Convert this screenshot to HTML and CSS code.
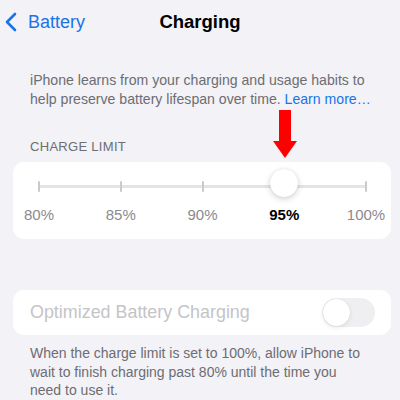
FILE: index.html
```html
<!DOCTYPE html>
<html lang="en">
<head>
    <meta charset="UTF-8">
    <meta name="viewport" content="width=device-width, initial-scale=1.0">
    <title>Charging</title>
    <link rel="stylesheet" href="styles.css">
</head>
<body>
    <header class="nav">
        <a class="back" href="#">
            <svg class="chevron" width="12" height="20" viewBox="0 0 12 20">
                <path d="M10 2 L2 10 L10 18" fill="none" stroke="currentColor" stroke-width="2.6" stroke-linecap="round" stroke-linejoin="round"/>
            </svg>
            <span>Battery</span>
        </a>
        <h1 class="title">Charging</h1>
    </header>

    <p class="intro">iPhone learns from your charging and usage habits to help preserve battery lifespan over time. <a href="#">Learn more…</a></p>

    <h2 class="section-title">CHARGE LIMIT</h2>
    <div class="card limit">
        <svg class="marker" width="24" height="48" viewBox="0 0 24 48">
            <rect x="6" y="0" width="12" height="32" fill="#ff0000"/>
            <polygon points="0,31 24,31 12,48" fill="#ff0000"/>
        </svg>
        <div class="slider">
            <div class="track"></div>
            <span class="tick" style="left: 0%"></span>
            <span class="tick" style="left: 25%"></span>
            <span class="tick" style="left: 50%"></span>
            <span class="tick" style="left: 100%"></span>
            <span class="thumb" style="left: 75%"></span>
        </div>
        <div class="steps">
            <span>80%</span>
            <span>85%</span>
            <span>90%</span>
            <span class="current">95%</span>
            <span>100%</span>
        </div>
    </div>

    <div class="card row disabled">
        <span class="row-label">Optimized Battery Charging</span>
        <span class="toggle"><span class="knob"></span></span>
    </div>
    <p class="footnote">When the charge limit is set to 100%, allow iPhone to wait to finish charging past 80% until the time you need to use it.</p>
</body>
</html>
```

FILE: styles.css
```css
:root {
    --bg: #f2f2f7;
    --card: #ffffff;
    --blue: #1a73e8;
    --grey: #6d6d72;
    --track: #e3e3e8;
}

body {
    margin: 0;
    background: var(--bg);
    font-family: "Liberation Sans", Arial, sans-serif;
    color: #000;
    width: 400px;
    overflow: hidden;
}

.nav {
    position: relative;
    height: 44px;
    display: flex;
    align-items: center;
}

.back {
    display: flex;
    align-items: center;
    gap: 11px;
    padding-left: 5px;
    color: var(--blue);
    text-decoration: none;
    font-size: 18px;
}

.title {
    position: absolute;
    left: 0;
    right: 0;
    top: 0;
    margin: 0;
    line-height: 44px;
    text-align: center;
    font-size: 18.5px;
    font-weight: 700;
    pointer-events: none;
}

.intro {
    margin: 27px 0 0;
    padding: 0 20px 0 30px;
    font-size: 14.1px;
    line-height: 18.5px;
    color: var(--grey);
}

.intro a {
    color: var(--blue);
    text-decoration: none;
}

.section-title {
    margin: 31px 0 8px;
    padding-left: 30px;
    font-size: 13px;
    font-weight: 400;
    color: var(--grey);
    letter-spacing: 0.3px;
}

.card {
    background: var(--card);
    border-radius: 11px;
    margin: 0 9px 0 13px;
}

.limit {
    position: relative;
    height: 77px;
    padding: 0 25px 0 26px;
}

.marker {
    position: absolute;
    left: 260px;
    top: -52px;
}

.slider {
    position: relative;
    height: 44px;
}

.track {
    position: absolute;
    left: 0;
    right: 0;
    top: 23px;
    height: 3px;
    border-radius: 2px;
    background: var(--track);
}

.tick {
    position: absolute;
    top: 19px;
    width: 2px;
    height: 11px;
    margin-left: -1px;
    border-radius: 1px;
    background: #c9c9ce;
}

.thumb {
    position: absolute;
    top: 7px;
    width: 28px;
    height: 28px;
    margin-left: -14px;
    border-radius: 50%;
    background: #fff;
    box-shadow: 0 2px 6px rgba(0, 0, 0, 0.18), 0 0 1px rgba(0, 0, 0, 0.15);
}

.steps {
    display: flex;
    justify-content: space-between;
    margin: 0 -20px;
    font-size: 15px;
    color: #8a8a8e;
}

.steps span {
    width: 40px;
    text-align: center;
}

.steps .current {
    color: #000;
    font-weight: 700;
}

.row {
    margin-top: 51px;
    height: 45px;
    display: flex;
    align-items: center;
    justify-content: space-between;
    padding: 0 16px 0 17px;
}

.row-label {
    font-size: 17.9px;
    color: #c4c4c7;
}

.toggle {
    position: relative;
    width: 53px;
    height: 29px;
    border-radius: 15px;
    background: #efeff2;
}

.knob {
    position: absolute;
    left: 1px;
    top: 1px;
    width: 27px;
    height: 27px;
    border-radius: 50%;
    background: #fff;
    box-shadow: 0 2px 5px rgba(0, 0, 0, 0.08), 0 0 1px rgba(0, 0, 0, 0.12);
}

.footnote {
    margin: 9px 0 0;
    padding: 0 34px 0 30px;
    font-size: 14px;
    line-height: 18.5px;
    color: var(--grey);
}
```
